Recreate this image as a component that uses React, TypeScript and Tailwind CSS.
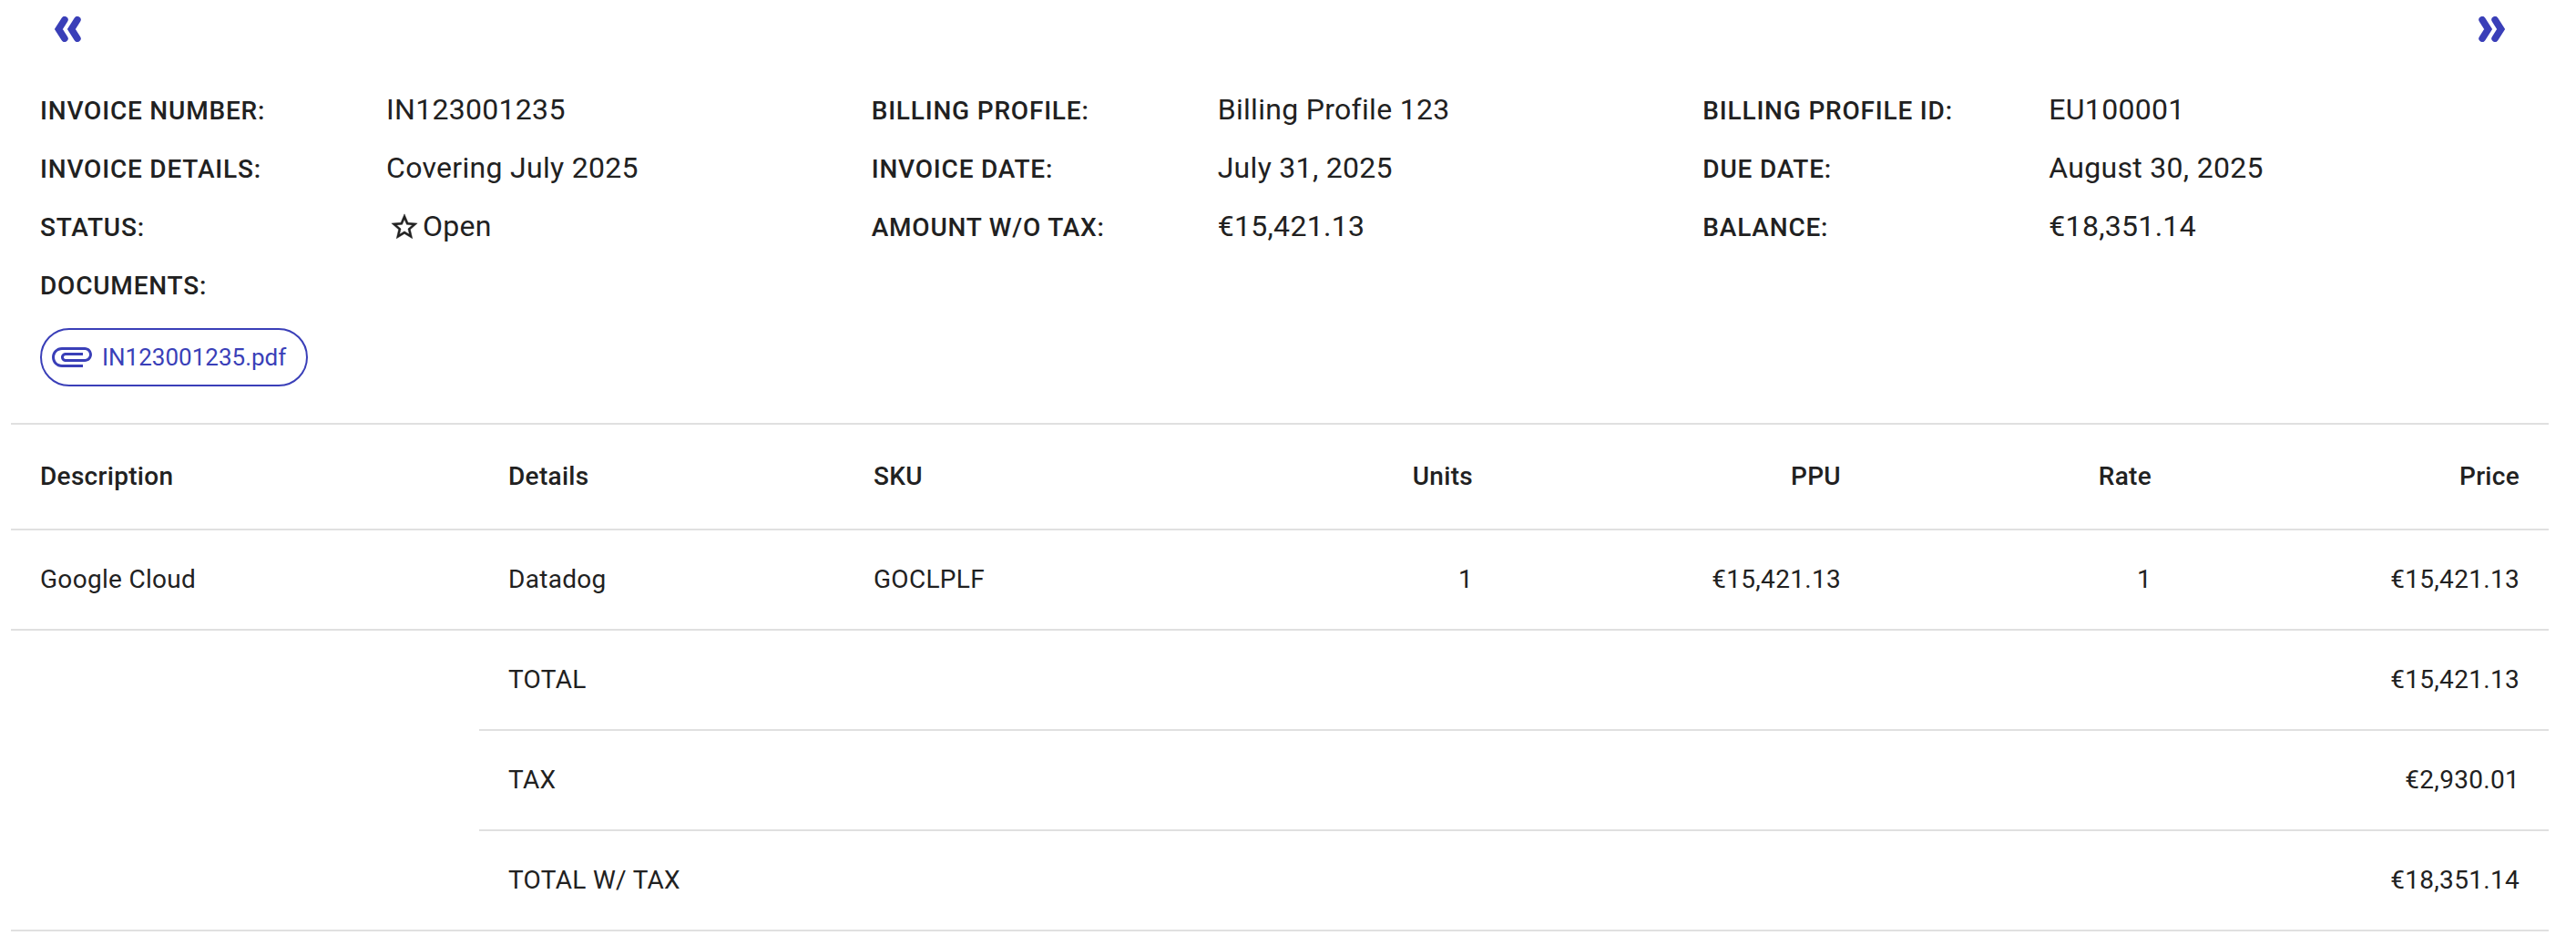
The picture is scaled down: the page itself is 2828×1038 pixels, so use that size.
type Field = { label: string; value: string; star?: boolean };

const fields: Field[] = [
  { label: "Invoice number:", value: "IN123001235" },
  { label: "Billing profile:", value: "Billing Profile 123" },
  { label: "Billing profile ID:", value: "EU100001" },
  { label: "Invoice details:", value: "Covering July 2025" },
  { label: "Invoice date:", value: "July 31, 2025" },
  { label: "Due date:", value: "August 30, 2025" },
  { label: "Status:", value: "Open", star: true },
  { label: "Amount w/o tax:", value: "€15,421.13" },
  { label: "Balance:", value: "€18,351.14" },
  { label: "Documents:", value: "" },
];

const totals = [
  { label: "TOTAL", value: "€15,421.13" },
  { label: "TAX", value: "€2,930.01" },
  { label: "TOTAL W/ TAX", value: "€18,351.14" },
];

function DoubleChevron({ right = false }: { right?: boolean }) {
  return (
    <svg
      width="30"
      height="28"
      viewBox="0 0 30 28"
      fill="none"
      stroke="#3a3fb8"
      strokeWidth="7.6"
      strokeLinecap="round"
      className={right ? "rotate-180" : ""}
    >
      <path d="M10.9 3.8 L4.4 14 L10.9 24.2" />
      <path d="M24.9 3.8 L18.4 14 L24.9 24.2" />
    </svg>
  );
}

function StarIcon() {
  return (
    <svg
      width="34"
      height="34"
      viewBox="0 0 24 24"
      fill="currentColor"
      stroke="currentColor"
      strokeWidth="0.3"
      strokeLinejoin="round"
      className="mr-[3px] ml-[3px] inline-block align-[-7px]"
    >
      <path d="M22 9.24l-7.19-.62L12 2 9.19 8.63 2 9.24l5.46 4.73L5.82 21 12 17.27 18.18 21l-1.63-7.03L22 9.24zM12 15.4l-3.76 2.27 1-4.28-3.32-2.88 4.38-.38L12 6.1l1.71 4.04 4.38.38-3.32 2.88 1 4.28L12 15.4z" />
    </svg>
  );
}

function ClipIcon() {
  return (
    <svg width="48" height="48" viewBox="0 0 24 24" fill="currentColor" className="mb-0.5 shrink-0 rotate-90">
      <path d="M16.5 6v11.5c0 2.21-1.79 4-4 4s-4-1.79-4-4V5c0-1.38 1.12-2.5 2.5-2.5s2.5 1.12 2.5 2.5v10.5c0 .55-.45 1-1 1s-1-.45-1-1V6H10v9.5c0 1.38 1.12 2.5 2.5 2.5s2.5-1.12 2.5-2.5V5c0-2.21-1.79-4-4-4S7 2.79 7 5v12.5c0 3.04 2.46 5.5 5.5 5.5s5.5-2.46 5.5-5.5V6h-1.5z" />
    </svg>
  );
}

export default function App() {
  return (
    <div className="h-[1038px] w-[2828px] overflow-hidden bg-white font-[Roboto,sans-serif] text-[#212121]">
      <div className="flex h-[88px] justify-between pt-[18px] pr-[78px] pl-[60px]">
        <button className="h-7">
          <DoubleChevron />
        </button>
        <button className="h-7">
          <DoubleChevron right />
        </button>
      </div>

      <div className="ml-11 grid w-[2738px] grid-cols-3">
        {fields.map((field) => (
          <div key={field.label} className="flex h-16 items-baseline pt-2">
            <span className="w-[380px] text-[28px] leading-[48px] font-medium tracking-[0.02857em] uppercase">
              {field.label}
            </span>
            {/* the space keeps a text baseline in rows without a value */}
            <span className="text-[32px] leading-[48px] tracking-[0.00938em]">
              {field.star && <StarIcon />}
              {field.value || "\u00a0"}
            </span>
          </div>
        ))}
      </div>

      <div className="mt-4 ml-11 flex h-16 w-[294px] items-center rounded-full border-2 border-[#3a3fb8] pl-[9px] text-[#3a3fb8]">
        <ClipIcon />
        <span className="ml-[9px] text-[26px] leading-10">IN123001235.pdf</span>
      </div>

      <table className="mt-10 ml-3 w-[2786px] table-fixed border-separate border-spacing-0 border-t-2 border-[#e0e0e0] text-left text-[28px] leading-10 tracking-[0.01071em] [&_td]:border-b-2 [&_td]:border-[#e0e0e0] [&_td]:px-8 [&_td]:py-0 [&_th]:border-b-2 [&_th]:border-[#e0e0e0] [&_th]:px-8 [&_th]:py-0 [&_th]:font-medium">
        <colgroup>
          <col className="w-[514px]" />
          <col className="w-[401px]" />
          <col className="w-[361px]" />
          <col className="w-[361px]" />
          <col className="w-[404px]" />
          <col className="w-[341px]" />
          <col className="w-[404px]" />
        </colgroup>
        <thead>
          <tr className="h-[116px]">
            <th>Description</th>
            <th>Details</th>
            <th>SKU</th>
            <th className="text-right">Units</th>
            <th className="text-right">PPU</th>
            <th className="text-right">Rate</th>
            <th className="text-right">Price</th>
          </tr>
        </thead>
        <tbody>
          <tr className="h-[110px]">
            <td>Google Cloud</td>
            <td>Datadog</td>
            <td>GOCLPLF</td>
            <td className="text-right">1</td>
            <td className="text-right">€15,421.13</td>
            <td className="text-right">1</td>
            <td className="text-right">€15,421.13</td>
          </tr>
          {totals.map((row, i) => (
            <tr key={row.label} className="h-[110px]">
              {i === 0 && <td rowSpan={3} />}
              <td colSpan={5}>{row.label}</td>
              <td className="text-right">{row.value}</td>
            </tr>
          ))}
        </tbody>
      </table>
    </div>
  );
}
